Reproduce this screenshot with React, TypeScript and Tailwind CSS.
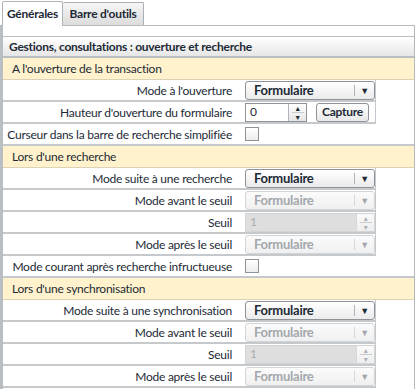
import type { ReactNode } from "react";

const font = "font-['Lato','Open_Sans',sans-serif] tracking-[-0.25px]";

function Select({ value, disabled }: { value: string; disabled?: boolean }) {
  return (
    <div
      className={
        "flex h-[19px] w-[130px] items-center rounded-[3px] border " +
        (disabled
          ? "border-[#d2d5d8] bg-gradient-to-b from-[#fbfbfb] to-[#f0f0f0] text-[#a3a8ad]"
          : "border-[#8e9399] bg-gradient-to-b from-white to-[#ebebeb] text-[#1d2a36]")
      }
    >
      <span className="flex-1 pl-[8px] text-[13px] font-bold leading-none">{value}</span>
      <span className={"h-[11px] w-px " + (disabled ? "bg-[#d6d8da]" : "bg-[#b0b4b8]")} />
      <span className="flex w-[19px] justify-center text-[9px] leading-none">▼</span>
    </div>
  );
}

function Spin({ value, disabled, wide }: { value: string; disabled?: boolean; wide?: boolean }) {
  return (
    <div
      className={
        "flex h-[19px] items-stretch border " +
        (wide ? "w-[130px] " : "w-[62px] ") +
        (disabled ? "border-[#d2d5d8] bg-[#dedede] text-[#a9adb1]" : "border-[#8e9399] bg-white text-[#1d2a36]")
      }
    >
      <span className="flex flex-1 items-center pl-[4px] text-[12px] leading-none">{value}</span>
      <span
        className={
          "flex w-[18px] flex-col items-center justify-center border-l text-[7px] leading-[8px] " +
          (disabled
            ? "border-[#d6d8da] bg-gradient-to-b from-[#fafafa] to-[#eeeeee] text-[#b0b4b8]"
            : "border-[#b0b4b8] bg-gradient-to-b from-white to-[#e6e6e6] text-[#1d2a36]")
        }
      >
        <span>▲</span>
        <span className="h-px w-[12px] bg-[#c7cacd]" />
        <span>▼</span>
      </span>
    </div>
  );
}

function Checkbox() {
  return <div className="h-[14px] w-[14px] border border-[#8e9399] bg-gradient-to-b from-white to-[#ececec]" />;
}

function Row({ label, children }: { label: string; children: ReactNode }) {
  return (
    <div className="flex h-[22px] items-stretch">
      <div className="flex w-[236px] items-center justify-end whitespace-nowrap border-b-2 border-[#c5c9cc] pr-[7px] pt-px text-[12px] text-[#1d2a36]">
        {label}
      </div>
      <div className="flex w-[137px] items-center border-b-2 border-r border-[#c5c9cc] pl-[6px]">{children}</div>
    </div>
  );
}

function CheckRow({ label }: { label: string }) {
  return (
    <div className="flex h-[22px] items-stretch border-b-2 border-[#c5c9cc]">
      <div className="flex w-[236px] items-center justify-end whitespace-nowrap pr-[7px] pt-px text-[12px] text-[#1d2a36]">
        {label}
      </div>
      <div className="flex items-center pl-[6px]">
        <Checkbox />
      </div>
    </div>
  );
}

function Section({ title }: { title: string }) {
  return (
    <div className="flex h-[22px] items-center border-b border-[#dcd3b6] bg-[#fff2cc] pl-[9px] pt-px text-[12px] text-[#1d2a36]">
      {title}
    </div>
  );
}

export default function App() {
  return (
    <div className={"h-[389px] w-[418px] overflow-hidden bg-white " + font}>
      <div className="flex h-[25px] items-end pl-[2px]">
        <div className="relative z-10 -mb-px flex h-[25px] w-[61px] items-center justify-center rounded-t-[2px] border border-b-0 border-[#b0b4b8] bg-white text-[12px] font-bold text-[#1d2a36]">
          Générales
        </div>
        <div className="flex h-[23px] w-[81px] items-center justify-center rounded-t-[2px] border border-b-0 border-l-0 border-[#aab0b5] bg-gradient-to-b from-[#f6f6f6] to-[#dcdcdc] text-[12px] font-bold text-[#1d2a36]">
          Barre d'outils
        </div>
      </div>
      <div className="h-[364px] w-[415px] border-l-[3px] border-r border-t border-[#b4b9bd] border-l-[#b9bec2] pt-[10px]">
        <div className="flex h-[22px] items-center border-b-2 border-t border-[#b9bec2] bg-gradient-to-b from-white to-[#e6e6e6] pl-[6px] text-[12px] font-bold text-[#1d2a36]">
          Gestions, consultations : ouverture et recherche
        </div>
        <Section title="A l'ouverture de la transaction" />
        <Row label="Mode à l'ouverture">
          <Select value="Formulaire" />
        </Row>
        <Row label="Hauteur d'ouverture du formulaire">
          <Spin value="0" />
          <div className="ml-[9px] flex h-[19px] w-[53px] items-center justify-center rounded-[3px] border border-[#8e9399] bg-gradient-to-b from-white to-[#e8e8e8] text-[12px] font-bold text-[#1d2a36]">
            Capture
          </div>
        </Row>
        <CheckRow label="Curseur dans la barre de recherche simplifiée" />
        <Section title="Lors d'une recherche" />
        <Row label="Mode suite à une recherche">
          <Select value="Formulaire" />
        </Row>
        <Row label="Mode avant le seuil">
          <Select value="Formulaire" disabled />
        </Row>
        <Row label="Seuil">
          <Spin value="1" disabled wide />
        </Row>
        <Row label="Mode après le seuil">
          <Select value="Formulaire" disabled />
        </Row>
        <CheckRow label="Mode courant après recherche infructueuse" />
        <Section title="Lors d'une synchronisation" />
        <Row label="Mode suite à une synchronisation">
          <Select value="Formulaire" />
        </Row>
        <Row label="Mode avant le seuil">
          <Select value="Formulaire" disabled />
        </Row>
        <Row label="Seuil">
          <Spin value="1" disabled wide />
        </Row>
        <Row label="Mode après le seuil">
          <Select value="Formulaire" disabled />
        </Row>
      </div>
    </div>
  );
}
